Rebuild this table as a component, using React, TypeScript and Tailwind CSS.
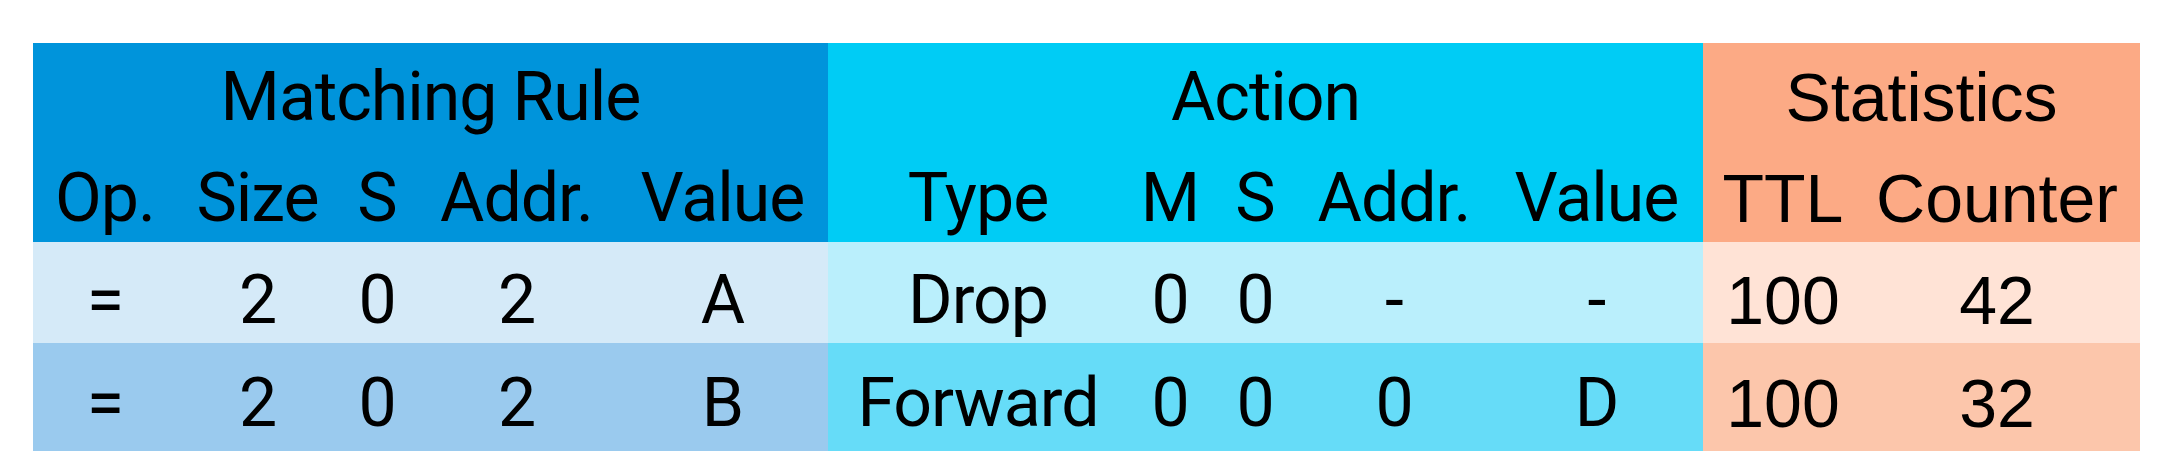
import React from 'react';

type Cell = { text: string; bg: string; span?: string; pad?: string; font?: string };

const din = "font-['Roboto','Liberation_Sans',sans-serif] tracking-[-1px]";
const arial = "font-['Liberation_Sans',Arial,sans-serif]";

const rowPad = ['pt-[16px]', 'pt-[18px]', 'pt-[20px]', 'pt-[22px]'];

const rows: Cell[][] = [
	[
		{ text: 'Matching Rule', bg: 'bg-[#0094db]', span: 'col-span-5' },
		{ text: 'Action', bg: 'bg-[#00ccf5]', span: 'col-span-5' },
		{ text: 'Statistics', bg: 'bg-[#fcaa85]', span: 'col-span-2', font: arial },
	],
	[
		...['Op.', 'Size', 'S', 'Addr.', 'Value'].map((t) => ({ text: t, bg: 'bg-[#0094db]' })),
		...['Type', 'M', 'S', 'Addr.', 'Value'].map((t) => ({ text: t, bg: 'bg-[#00ccf5]' })),
		{ text: 'TTL', bg: 'bg-[#fcaa85]', font: arial },
		{ text: 'Counter', bg: 'bg-[#fcaa85]', font: arial, pad: 'pr-[9px]' },
	],
	[
		...['=', '2', '0', '2', 'A'].map((t) => ({ text: t, bg: 'bg-[#d5eaf8]' })),
		...['Drop', '0', '0', '-', '-'].map((t) => ({ text: t, bg: 'bg-[#baeffc]' })),
		{ text: '100', bg: 'bg-[#ffe3d6]', font: arial },
		{ text: '42', bg: 'bg-[#ffe3d6]', font: arial, pad: 'pr-[9px]' },
	],
	[
		...['=', '2', '0', '2', 'B'].map((t) => ({ text: t, bg: 'bg-[#9acaee]' })),
		...['Forward', '0', '0', '0', 'D'].map((t) => ({ text: t, bg: 'bg-[#66dcf8]' })),
		{ text: '100', bg: 'bg-[#fcc6ab]', font: arial },
		{ text: '32', bg: 'bg-[#fcc6ab]', font: arial, pad: 'pr-[9px]' },
	],
];

export default function App() {
	return (
		<div className="w-[2168px] h-[476px] bg-white pl-[33px] pt-[43px]">
			<div className="grid w-[2107px] grid-cols-[144px_161px_78px_201px_211px_300px_84px_86px_192px_213px_160px_277px] grid-rows-[99px_100px_101px_108px] text-black">
				{rows.map((row, r) =>
					row.map((c, i) => (
						<div
							key={`${r}-${i}`}
							className={`${c.bg} ${c.span ?? ''} ${c.font ?? din} ${rowPad[r]} ${c.pad ?? ''} text-center text-[68px] leading-[76px] whitespace-nowrap`}
						>
							{c.text}
						</div>
					))
				)}
			</div>
		</div>
	);
}
